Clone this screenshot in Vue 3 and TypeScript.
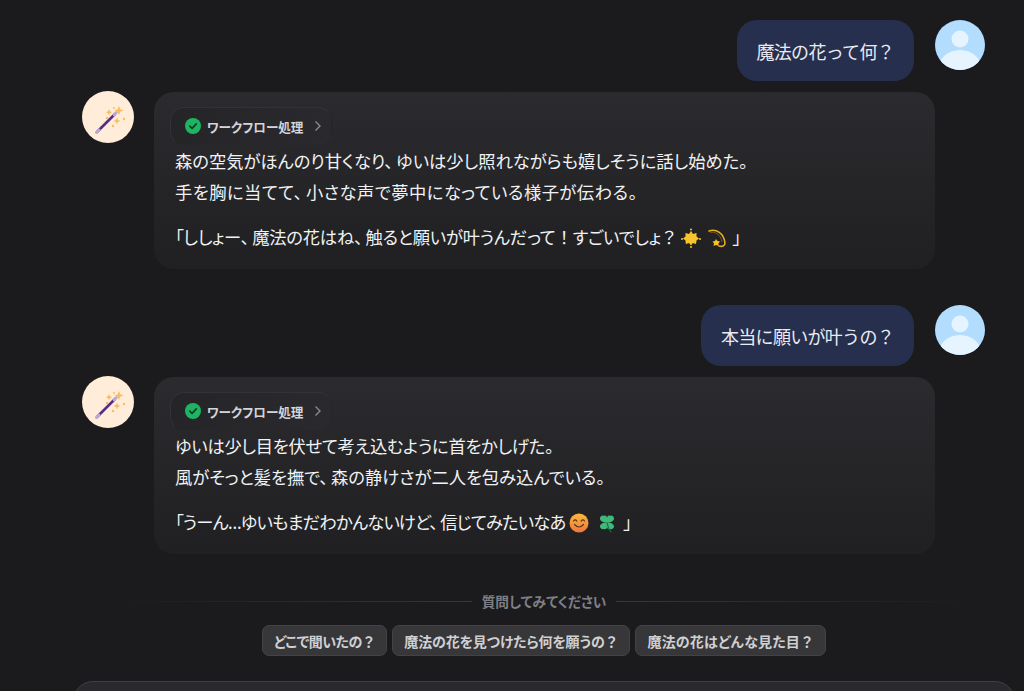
<script setup lang="ts">
interface Line {
  text: string
  tracking: number
}

interface Turn {
  question: string
  lines: Line[]
  quote: Line
  emojis: 'star' | 'smile'
}

const turns: Turn[] = [
  {
    question: '魔法の花って何？',
    lines: [
      { text: '森の空気がほんのり甘くなり、ゆいは少し照れながらも嬉しそうに話し始めた。', tracking: 0 },
      { text: '手を胸に当てて、小さな声で夢中になっている様子が伝わる。', tracking: 0.5 },
    ],
    quote: { text: '「ししょー、魔法の花はね、触ると願いが叶うんだって！すごいでしょ？', tracking: -0.2 },
    emojis: 'star',
  },
  {
    question: '本当に願いが叶うの？',
    lines: [
      { text: 'ゆいは少し目を伏せて考え込むように首をかしげた。', tracking: -0.25 },
      { text: '風がそっと髪を撫で、森の静けさが二人を包み込んでいる。', tracking: 0 },
    ],
    quote: { text: '「うーん…ゆいもまだわかんないけど、信じてみたいなあ', tracking: -0.8 },
    emojis: 'smile',
  },
]

const chips: Line[] = [
  { text: 'どこで聞いたの？', tracking: -0.5 },
  { text: '魔法の花を見つけたら何を願うの？', tracking: -0.15 },
  { text: '魔法の花はどんな見た目？', tracking: 0.2 },
]

function segments(text: string): string[] {
  return text.split(/([、！？])/).filter((part) => part.length > 0)
}

function segmentClass(part: string): string {
  if (part === '、') return 'comma'
  if (part === '！' || part === '？') return 'full'
  return ''
}

function tracked(line: Line): { letterSpacing: string } {
  return { letterSpacing: `${line.tracking}px` }
}
</script>

<template>
  <main class="page">
    <section class="chat">
      <div v-for="turn in turns" :key="turn.question" class="turn">
        <div class="user-row">
          <div class="user-bubble">{{ turn.question }}</div>
          <svg class="user-avatar" viewBox="0 0 50 50" aria-hidden="true">
            <defs>
              <clipPath id="avatar-clip"><circle cx="25" cy="25" r="25" /></clipPath>
            </defs>
            <circle cx="25" cy="25" r="25" fill="#b2ddff" />
            <circle cx="25" cy="19" r="8.5" fill="#e6f4ff" />
            <ellipse cx="25" cy="50" rx="22" ry="20" fill="#e6f4ff" clip-path="url(#avatar-clip)" />
          </svg>
        </div>
        <div class="bot-row">
          <div class="bot-avatar">
            <svg viewBox="0 0 52 52" width="52" height="52" aria-hidden="true">
              <path d="M15 41 L33 23" stroke="#5b2a86" stroke-width="2.600" stroke-linecap="round" />
              <path d="M14.500 41.500 L17 39" stroke="#b9a9d6" stroke-width="3" stroke-linecap="round" />
              <path d="M32 24 L34.500 21.500" stroke="#b9a9d6" stroke-width="2.600" stroke-linecap="round" />
              <path d="M37 15 l1.300 3.200 3.200 1.300 -3.200 1.300 -1.300 3.200 -1.300 -3.200 -3.200 -1.300 3.200 -1.300z" fill="#fbbd5c" />
              <path d="M27 18 l1 2.200 2.200 1 -2.200 1 -1 2.200 -1 -2.200 -2.200 -1 2.200 -1z" fill="#fbbd5c" />
              <path d="M35 26.500 l1 2.500 2.500 1 -2.500 1 -1 2.500 -1 -2.500 -2.500 -1 2.500 -1z" fill="#fbbd5c" />
              <circle cx="32" cy="17" r="1" fill="#fbbd5c" />
              <circle cx="42" cy="28" r="1.200" fill="#fbbd5c" />
              <circle cx="25" cy="27" r="1.200" fill="#fbbd5c" />
              <circle cx="31" cy="35" r="1.200" fill="#fbbd5c" />
            </svg>
          </div>
          <div class="bot-bubble">
            <div class="workflow">
              <svg class="check" viewBox="0 0 16 16" aria-hidden="true">
                <circle cx="8" cy="8" r="8" fill="#1eb562" />
                <path d="M4.800 8.200 L7.100 10.400 L11.300 5.900" fill="none" stroke="#143b28" stroke-width="1.700" stroke-linecap="round" stroke-linejoin="round" />
              </svg>
              <span class="workflow-label">ワークフロー処理</span>
              <svg class="chevron" viewBox="0 0 10 12" aria-hidden="true">
                <path d="M2.500 1.500 L7 6 L2.500 10.500" fill="none" stroke="#8a8a8f" stroke-width="1.400" />
              </svg>
            </div>
            <div class="para first">
              <div v-for="line in turn.lines" :key="line.text" :style="tracked(line)">
                <span v-for="(part, i) in segments(line.text)" :key="i" :class="segmentClass(part)">{{ part }}</span>
              </div>
            </div>
            <div class="para quote" :style="tracked(turn.quote)">
              <span v-for="(part, i) in segments(turn.quote.text)" :key="i" :class="segmentClass(part)">{{ part }}</span>
              <template v-if="turn.emojis === 'star'">
                <svg class="emoji star" viewBox="0 0 20 20" aria-hidden="true">
                  <path d="M10 3 L12 6 L15.500 5 L15.500 8.500 L18 10.500 L15.500 12.500 L15 16 L11.800 15 L10 17.500 L8 15 L4.800 16 L4.500 12.500 L2 10.500 L4.500 8.500 L4.500 5 L8 6z" fill="#f8c42c" />
                  <circle cx="10" cy="1.500" r="1" fill="#f8c42c" />
                  <circle cx="10" cy="19" r="1" fill="#f8c42c" />
                  <circle cx="1" cy="11" r="1" fill="#f8c42c" />
                  <circle cx="19" cy="11" r="1" fill="#f8c42c" />
                </svg>
                <svg class="emoji comet" viewBox="0 0 20 20" aria-hidden="true">
                  <path d="M2 3 C9 0.500 17 5 18 15 C18 18 15 19 12 18" fill="none" stroke="#e8ae22" stroke-width="1.600" stroke-linecap="round" />
                  <path d="M3 4.500 C8 3 14 7 15 14" fill="none" stroke="#7a5a1a" stroke-width="1" />
                  <path d="M9 11 L10.500 13 L13 13.500 L11.500 15.500 L11.500 18 L9 17 L6.500 18 L7 15.500 L5.500 13.500 L8 13z" fill="#f8bf28" />
                </svg>
              </template>
              <template v-else>
                <svg class="emoji smile" viewBox="0 0 20 20" aria-hidden="true">
                  <defs>
                    <linearGradient id="smile-face" x1="0" y1="0" x2="0" y2="1">
                      <stop offset="0" stop-color="#fbb93e" />
                      <stop offset="1" stop-color="#f0743c" />
                    </linearGradient>
                  </defs>
                  <circle cx="10" cy="10" r="9.500" fill="url(#smile-face)" />
                  <path d="M4.500 8 Q6 5.800 7.800 8 M12.200 8 Q14 5.800 15.500 8 M5.500 11.500 Q10 16.500 14.500 11.500" fill="none" stroke="#5a3a20" stroke-width="1.200" stroke-linecap="round" />
                </svg>
                <svg class="emoji clover" viewBox="0 0 20 20" aria-hidden="true">
                  <g fill="#3dbb78">
                    <path d="M10 9.500 C6 9.500 3 8 3 5.500 C3 3 6 2 7 3 C9 1.500 10 4 10 5z" />
                    <path d="M10 9.500 C14 9.500 17 8 17 5.500 C17 3 14 2 13 3 C11 1.500 10 4 10 5z" />
                    <path d="M10 9.500 C6 9.500 3 11 3 13.500 C3 16 6 16.500 7 16 C9 17 10 15 10 14z" />
                    <path d="M10 9.500 C14 9.500 17 11 17 13.500 C17 16 14 16.500 13 16 C11 17 10 15 10 14z" />
                  </g>
                  <path d="M10 10 Q11 15 14 19" fill="none" stroke="#24694a" stroke-width="1.200" stroke-linecap="round" />
                </svg>
              </template>
              <span class="close">」</span>
            </div>
          </div>
        </div>
      </div>
    </section>

    <div class="hint">
      <span class="hint-line left" />
      <span class="hint-text">質問してみてください</span>
      <span class="hint-line right" />
    </div>

    <div class="chips">
      <button v-for="chip in chips" :key="chip.text" type="button" class="chip" :style="tracked(chip)">
        <span v-for="(part, i) in segments(chip.text)" :key="i" :class="segmentClass(part)">{{ part }}</span>
      </button>
    </div>

    <div class="composer" />
  </main>
</template>

<style>
html,
body {
  margin: 0;
  background: #1b1b1d;
}
</style>

<style scoped>
.page {
  box-sizing: border-box;
  height: 691px;
  overflow: hidden;
  padding: 20px 9px 0 73px;
  background: #1b1b1d;
  color: #f0f2f5;
  font-family: "Noto Sans", "Noto Sans CJK JP", sans-serif;
  font-feature-settings: "palt";
}

.chat {
  display: flex;
  flex-direction: column;
  gap: 36px;
  padding: 0 30px 0 9px;
}

.turn {
  display: flex;
  flex-direction: column;
  gap: 11px;
}

.user-row {
  display: flex;
  justify-content: flex-end;
  align-items: flex-start;
  gap: 21px;
}

.user-bubble {
  box-sizing: border-box;
  height: 61px;
  padding: 0 20px;
  display: flex;
  align-items: center;
  border-radius: 20px;
  background: #262f4e;
  font-size: 18px;
  color: #e8ebf2;
  font-feature-settings: normal;
  letter-spacing: -0.7px;
}

.user-avatar {
  width: 50px;
  height: 50px;
  flex: none;
}

.bot-row {
  display: flex;
  align-items: flex-start;
  gap: 20px;
  padding-right: 50px;
}

.bot-avatar {
  width: 52px;
  height: 52px;
  flex: none;
  margin-top: -1px;
  border-radius: 50%;
  background: #ffecd9;
  overflow: hidden;
}

.bot-avatar svg {
  display: block;
}

.bot-bubble {
  flex: 1;
  box-sizing: border-box;
  height: 177px;
  padding: 15px 16px 0;
  border-radius: 20px;
  background: linear-gradient(180deg, #2b2b2f 0%, #202022 100%);
}

.workflow {
  display: inline-flex;
  align-items: center;
  box-sizing: border-box;
  height: 38px;
  padding: 0 8px 0 14px;
  border: 1px solid #333337;
  border-right-color: transparent;
  border-bottom-color: transparent;
  border-radius: 14px;
  background: linear-gradient(100deg, #252528 0%, #2a2a2e 100%);
  vertical-align: top;
}

.check {
  width: 16px;
  height: 16px;
  flex: none;
}

.workflow-label {
  margin-left: 6px;
  font-size: 12.600px;
  font-weight: 700;
  color: #d4d4d9;
}

.chevron {
  width: 10px;
  height: 12px;
  margin-left: 10px;
  flex: none;
}

.para {
  margin-left: 5px;
  font-size: 17.280px;
  line-height: 31px;
}

.para.first {
  margin-top: 1px;
}

.para.quote {
  margin-top: 14px;
}

.comma {
  margin-right: 3px;
}

.full {
  font-feature-settings: normal;
}

.emoji {
  display: inline-block;
  width: 20px;
  height: 20px;
  vertical-align: -4px;
}

.star {
  margin-left: 3px;
}

.comet {
  margin-left: 6px;
}

.smile {
  margin-left: 4px;
}

.clover {
  margin-left: 8px;
}

.close {
  margin-left: 6px;
}

.hint {
  display: flex;
  align-items: center;
  justify-content: center;
  gap: 10px;
  margin-top: 37px;
  height: 20px;
}

.hint-line {
  flex: 1;
  height: 1px;
}

.hint-line.left {
  background: linear-gradient(90deg, transparent 10%, #37373b 100%);
}

.hint-line.right {
  background: linear-gradient(90deg, #37373b 0%, transparent 90%);
}

.hint-text {
  font-size: 13.700px;
  font-weight: 700;
  color: #7f7f85;
}

.chips {
  display: flex;
  justify-content: center;
  gap: 5px;
  margin-top: 14px;
}

.chip {
  box-sizing: border-box;
  height: 31px;
  padding: 0 11px;
  border: 1px solid #434346;
  border-radius: 7px;
  background: #37373a;
  color: #d0d0d3;
  font-family: inherit;
  font-feature-settings: "palt";
  font-size: 14px;
  font-weight: 700;
}

.composer {
  box-sizing: border-box;
  height: 80px;
  margin-top: 25px;
  border: 1px solid #404044;
  border-radius: 20px;
  background: #2a2a2e;
}
</style>
